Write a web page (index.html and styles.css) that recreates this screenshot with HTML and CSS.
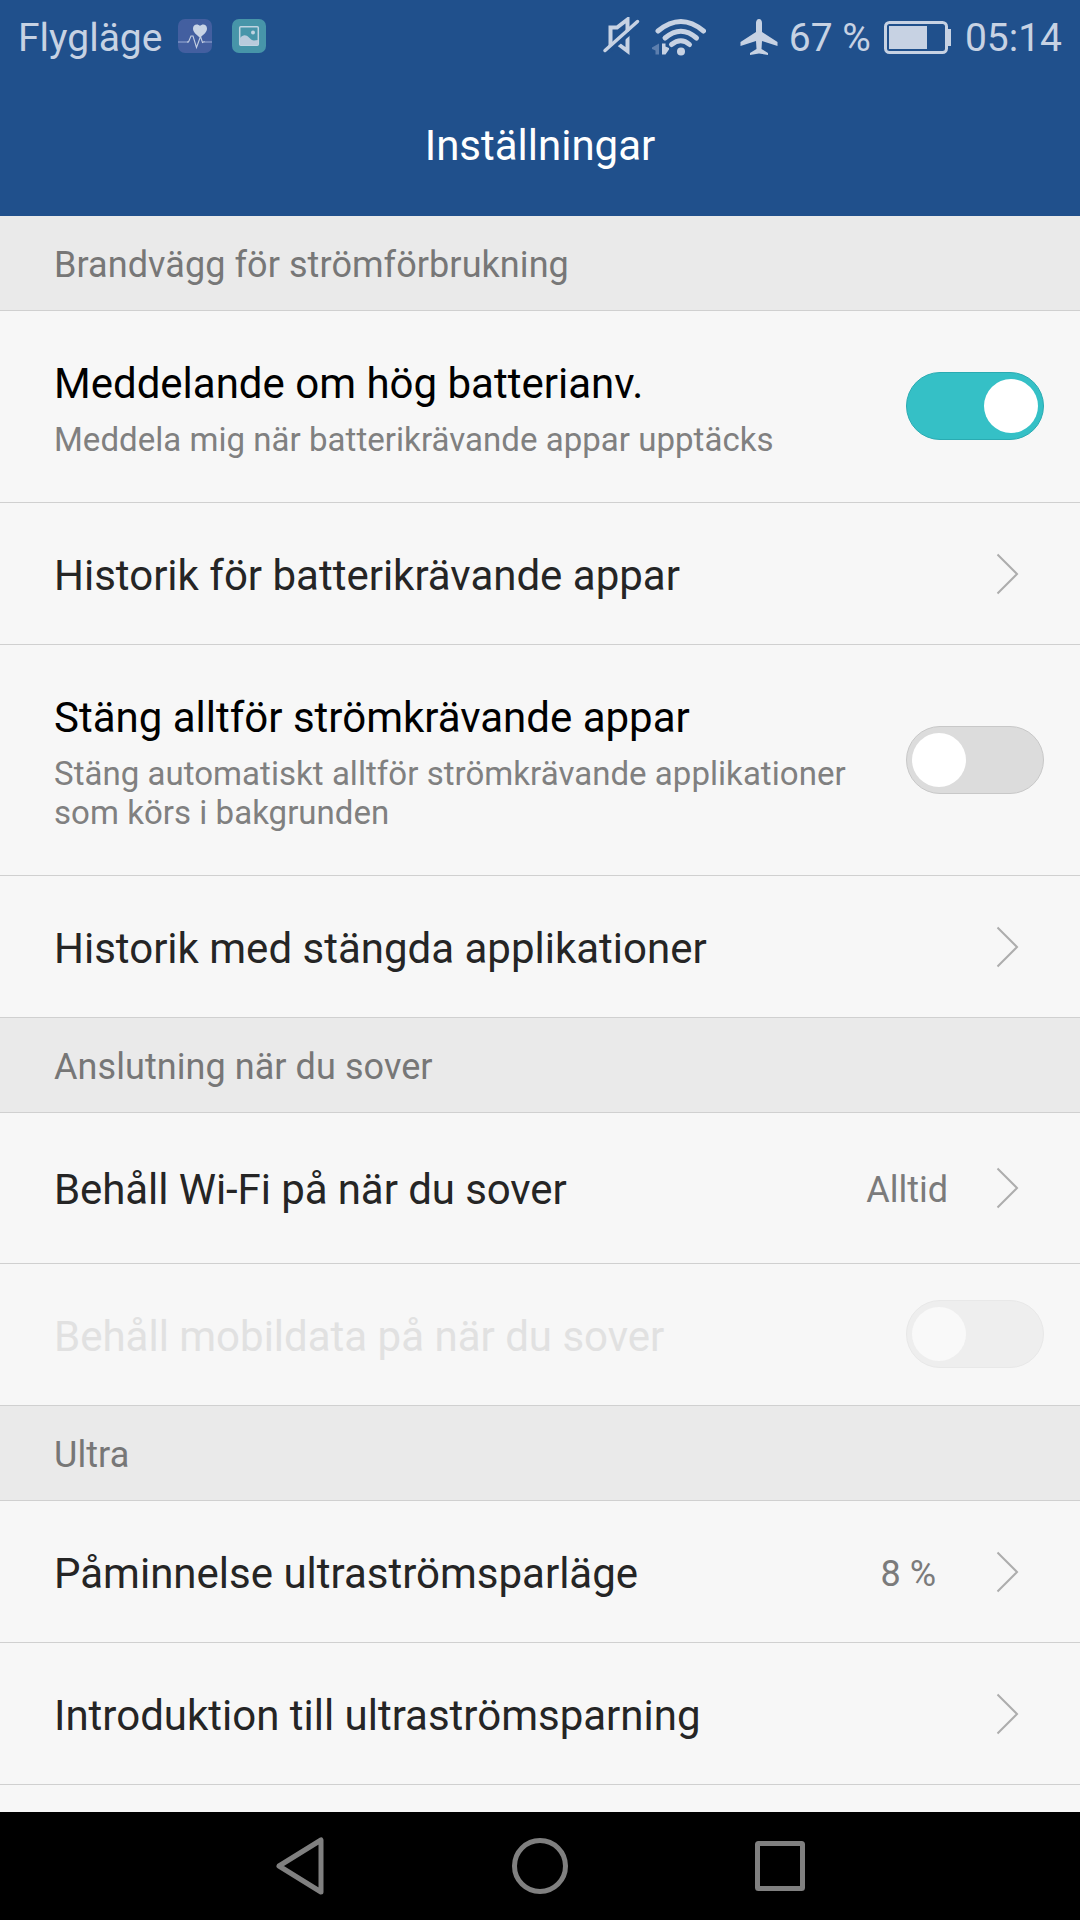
FILE: index.html
```html
<!DOCTYPE html>
<html lang="sv">
<head>
    <meta charset="UTF-8">
    <meta name="viewport" content="width=device-width, initial-scale=1.0">
    <title>Inställningar</title>
    <link rel="stylesheet" href="styles.css">
</head>
<body>
    <header class="top">
        <div class="status-bar">
            <span class="carrier">Flygläge</span>
            <svg class="app-icon" width="34" height="34" viewBox="0 0 34 34">
                <rect width="34" height="34" rx="7" fill="#435fa0"/>
                <path d="M0 23h10M26 23h8" stroke="#7f94c4" stroke-width="1.500" fill="none"/>
                <path d="M9 23h1.500l2.500-6 2 0 3.500 11.500 4-11 2 6 2-1" stroke="#c5d0e3" stroke-width="1.100" fill="none"/>
                <path d="M22 18.500c-4-3-7-5.500-7-9 0-4.500 5-5 7-2.500 2-2.500 7-2 7 2.500 0 3.500-3 6-7 9z" fill="#c9d4e5"/>
            </svg>
            <svg class="app-icon second" width="34" height="34" viewBox="0 0 34 34">
                <rect width="34" height="34" rx="7" fill="#4795a9"/>
                <rect x="7.700" y="7.700" width="18.600" height="18.600" rx="1" stroke="#c0d4e1" stroke-width="1.500" fill="none"/>
                <circle cx="21" cy="13.500" r="2" fill="#c0d4e1"/>
                <path d="M8 19c3-3.500 6-3.500 9-.500 2 2 3 3 5 3l4-.500v5H8z" fill="#b9cbdc"/>
            </svg>
            <div class="status-right">
                <svg class="mute" width="38" height="40" viewBox="0 0 38 40">
                    <path d="M8.500 29V10.500H15L25.500 2.500V15" fill="none" stroke="#c7d2e3" stroke-width="4"/>
                    <path d="M15.500 26.500L25.500 34V18" fill="none" stroke="#c7d2e3" stroke-width="4"/>
                    <path d="M5 36L38 7" stroke="#20508c" stroke-width="4"/>
                    <path d="M3 33.500L35.500 4.500" stroke="#c7d2e3" stroke-width="3.500" stroke-linecap="round"/>
                </svg>
                <svg class="wifi" width="56" height="40" viewBox="0 0 56 40">
                    <g fill="none" stroke="#c7d2e3" stroke-width="5" stroke-linecap="round">
                        <path d="M8 14Q31 -5 53.500 14"/>
                        <path d="M15 21Q31 7.500 46.500 21"/>
                        <path d="M21.500 27.500Q31 20 39.500 27.500"/>
                    </g>
                    <circle cx="31" cy="34.500" r="4" fill="#c7d2e3"/>
                    <path d="M9 26.500v11H5.500v-4L2 32v-1.500z" fill="#5d7fae"/>
                    <path d="M12 26.500h3.500v3l3.500 1.500v1.500l-3.500 5H12z" fill="#c7d2e3"/>
                </svg>
                <svg class="plane" width="38" height="38" viewBox="0 0 38 38">
                    <path d="M19 1c2 0 3 2 3 4v9l15.500 10v4L22 23l-.500 8 6.500 4v2l-9-1.500-9 1.500v-2l6.500-4-.500-8L.500 28v-4L16 14V5c0-2 1-4 3-4z" fill="#c7d2e3"/>
                </svg>
                <span class="percent">67 %</span>
                <svg class="battery" width="68" height="34" viewBox="0 0 68 34">
                    <rect x="1.500" y="1.500" width="61" height="30" rx="4" fill="none" stroke="#c7d2e3" stroke-width="3"/>
                    <path d="M64 8h3v17h-3z" fill="#c7d2e3"/>
                    <rect x="5" y="5" width="38" height="23" fill="#c7d2e3"/>
                </svg>
                <span class="clock">05:14</span>
            </div>
        </div>
        <h1>Inställningar</h1>
    </header>

    <main>
        <h2>Brandvägg för strömförbrukning</h2>
        <div class="row row-notice">
            <div class="text">
                <div class="title dark">Meddelande om hög batterianv.</div>
                <div class="summary">Meddela mig när batterikrävande appar upptäcks</div>
            </div>
            <div class="toggle on"><div class="knob"></div></div>
        </div>
        <div class="row">
            <div class="title">Historik för batterikrävande appar</div>
            <svg class="chevron" width="24" height="44" viewBox="0 0 24 44"><path d="M1.500 2.500L21 22 1.500 41.500"/></svg>
        </div>
        <div class="row row-close">
            <div class="text">
                <div class="title dark">Stäng alltför strömkrävande appar</div>
                <div class="summary">Stäng automatiskt alltför strömkrävande applikationer som körs i bakgrunden</div>
            </div>
            <div class="toggle"><div class="knob"></div></div>
        </div>
        <div class="row">
            <div class="title">Historik med stängda applikationer</div>
            <svg class="chevron" width="24" height="44" viewBox="0 0 24 44"><path d="M1.500 2.500L21 22 1.500 41.500"/></svg>
        </div>

        <h2>Anslutning när du sover</h2>
        <div class="row row-wifi">
            <div class="title">Behåll Wi-Fi på när du sover</div>
            <div class="value">Alltid</div>
            <svg class="chevron" width="24" height="44" viewBox="0 0 24 44"><path d="M1.500 2.500L21 22 1.500 41.500"/></svg>
        </div>
        <div class="row disabled">
            <div class="title">Behåll mobildata på när du sover</div>
            <div class="toggle"><div class="knob"></div></div>
        </div>

        <h2>Ultra</h2>
        <div class="row">
            <div class="title">Påminnelse ultraströmsparläge</div>
            <div class="value wide">8 %</div>
            <svg class="chevron" width="24" height="44" viewBox="0 0 24 44"><path d="M1.500 2.500L21 22 1.500 41.500"/></svg>
        </div>
        <div class="row">
            <div class="title">Introduktion till ultraströmsparning</div>
            <svg class="chevron" width="24" height="44" viewBox="0 0 24 44"><path d="M1.500 2.500L21 22 1.500 41.500"/></svg>
        </div>
    </main>

    <nav class="nav-bar">
        <svg width="60" height="64" viewBox="0 0 60 64"><path d="M51 6v52L9 32z"/></svg>
        <svg width="60" height="64" viewBox="0 0 60 64"><circle cx="30" cy="32" r="25.500"/></svg>
        <svg width="60" height="64" viewBox="0 0 60 64"><rect x="7.500" y="9.500" width="45" height="45" rx="1"/></svg>
    </nav>
</body>
</html>
```

FILE: styles.css
```css
* {
    box-sizing: border-box;
}
body {
    margin: 0;
    width: 1080px;
    height: 1920px;
    display: flex;
    flex-direction: column;
    overflow: hidden;
    background-color: #f7f7f7;
    font-family: Roboto, sans-serif;
}
.top {
    height: 216px;
    background-color: #20508c;
    color: #fff;
}
.status-bar {
    height: 75px;
    padding: 0 18px;
    display: flex;
    align-items: center;
    color: #c7d2e3;
    font-size: 39px;
    line-height: 46px;
}
.app-icon {
    margin-left: 16px;
    margin-top: -3px;
}
.app-icon.second {
    margin-left: 20px;
}
.status-right {
    margin-left: auto;
    display: flex;
    align-items: center;
}
.mute {
    margin-top: -2px;
}
.wifi {
    margin-left: 10px;
    margin-top: -2px;
}
.plane {
    margin-left: 34px;
    margin-top: -2px;
}
.percent {
    margin-left: 11px;
}
.battery {
    margin-left: 13px;
}
.clock {
    margin-left: 13px;
}
h1 {
    margin: 0;
    padding-top: 46px;
    font-size: 42px;
    line-height: 49px;
    font-weight: 400;
    text-align: center;
}
main {
    flex: 1;
}
h2 {
    margin: 0;
    height: 95px;
    padding: 28px 54px 0;
    border-bottom: 1px solid #d0d0d0;
    background-color: #eaeaea;
    color: #777;
    font-size: 36px;
    line-height: 42px;
    font-weight: 400;
    letter-spacing: 0.07px;
}
.row {
    height: 142px;
    padding: 0 36px 0 54px;
    display: flex;
    align-items: center;
    border-bottom: 1px solid #d0d0d0;
}
.row-notice {
    height: 192px;
}
.row-close {
    height: 231px;
}
.row-wifi {
    height: 151px;
}
.text {
    width: 810px;
}
.title {
    padding-top: 3px;
    color: #252525;
    font-size: 42px;
    line-height: 49px;
}
.title.dark {
    padding-top: 4px;
    color: #000;
}
.row-wifi .title {
    letter-spacing: -0.08px;
}
.summary {
    padding-top: 12px;
    color: #808080;
    font-size: 33px;
    line-height: 39px;
    letter-spacing: 0.04px;
}
.toggle {
    width: 138px;
    height: 68px;
    margin-left: auto;
    padding: 0 5px;
    display: flex;
    align-items: center;
    border: 1px solid #c8c8c8;
    border-radius: 34px;
    background-color: #dcdcdc;
}
.toggle.on {
    justify-content: flex-end;
    border-color: #2aabb2;
    background-color: #35c0c6;
}
.row-notice .toggle,
.disabled .toggle {
    margin-bottom: 1px;
}
.knob {
    width: 54px;
    height: 54px;
    border-radius: 50%;
    background-color: #fff;
}
.chevron {
    margin-left: auto;
    margin-right: 24px;
    fill: none;
    stroke: #adadad;
    stroke-width: 2;
}
.value {
    margin-left: auto;
    padding-top: 3px;
    color: #7b7b7b;
    font-size: 36px;
    line-height: 42px;
}
.value + .chevron {
    margin-left: 48px;
}
.value.wide {
    padding-top: 4px;
}
.value.wide + .chevron {
    margin-left: 60px;
}
.disabled .title {
    color: #e1e1e1;
}
.disabled .toggle {
    border-color: #e8e8e8;
    background-color: #eee;
}
.disabled .knob {
    background-color: #f9f9f9;
}
.nav-bar {
    height: 108px;
    padding: 0 270px;
    display: flex;
    align-items: center;
    justify-content: space-between;
    background-color: #000;
    fill: none;
    stroke: #808080;
    stroke-width: 5;
    stroke-linejoin: round;
}
```
